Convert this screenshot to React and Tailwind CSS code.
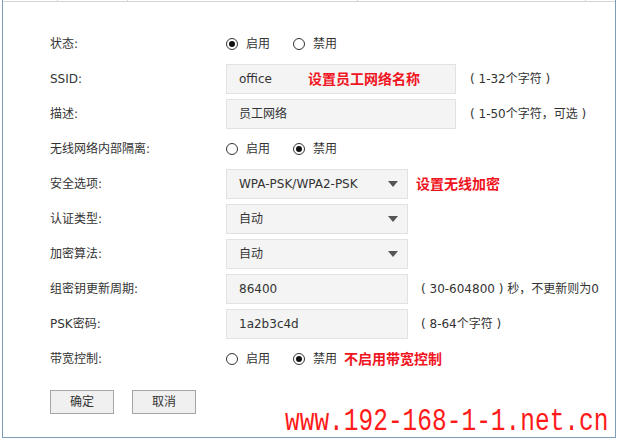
import React from "react";

const Radio = ({ checked }) => (
  <span className="w-[12px] h-[12px] rounded-full border border-[#333] bg-white flex items-center justify-center">
    {checked && <span className="w-[6px] h-[6px] rounded-full bg-[#111]" />}
  </span>
);

const RadioGroup = ({ value, note }) => (
  <div className="flex items-center gap-[23px]">
    <label className="flex items-center gap-[8px]">
      <Radio checked={value === "on"} />
      <span>启用</span>
    </label>
    <label className="flex items-center gap-[8px]">
      <Radio checked={value === "off"} />
      <span>禁用</span>
    </label>
    {note && <span className="-ml-[16px] text-[14px] font-bold text-[#f0141e]">{note}</span>}
  </div>
);

const Arrow = () => (
  <svg width="10" height="6" viewBox="0 0 10 6">
    <polygon points="0,0 10,0 5,6" fill="#555" />
  </svg>
);

const Select = ({ value }) => (
  <div className="w-[182px] h-[30px] bg-[#f4f4f4] border border-[#e2e2e2] pl-[12px] pr-[9px] flex items-center justify-between">
    <span>{value}</span>
    <Arrow />
  </div>
);

const Row = ({ label, children }) => (
  <div className="flex items-center h-[30px]">
    <div className="w-[176px]">{label}</div>
    {children}
  </div>
);

export default function App() {
  return (
    <div className="w-[618px] h-[439px] bg-white relative overflow-hidden text-[12px] text-[#333] font-['DejaVu_Sans','Noto_Sans_CJK_SC',sans-serif]">
      <div className="ml-[2px] w-[614px] h-[438px] border-l border-r border-b border-[#7f9db9] flex flex-col">
        <div className="h-[2px] flex border-b border-[#d4d4d4]">
          <div className="w-[55px] border-r border-[#d4d4d4]" />
          <div className="w-[70px] border-r border-[#d4d4d4]" />
          <div className="w-[230px] border-r border-[#d4d4d4]" />
          <div className="w-[228px] border-r border-[#d4d4d4]" />
          <div className="flex-1" />
        </div>

        <div className="pl-[47px] pt-[27px] flex flex-col gap-[5px]">
          <Row label="状态:">
            <RadioGroup value="on" />
          </Row>
          <Row label="SSID:">
            <div className="w-[230px] h-[30px] bg-[#f4f4f4] border border-[#e2e2e2] pl-[12px] flex items-center">
              <span className="w-[69px]">office</span>
              <span className="text-[14px] font-bold text-[#f0141e]">设置员工网络名称</span>
            </div>
            <span className="ml-[14px]">( 1-32个字符 )</span>
          </Row>
          <Row label="描述:">
            <div className="w-[230px] h-[30px] bg-[#f4f4f4] border border-[#e2e2e2] pl-[12px] flex items-center">
              员工网络
            </div>
            <span className="ml-[14px]">( 1-50个字符，可选 )</span>
          </Row>
          <Row label="无线网络内部隔离:">
            <RadioGroup value="off" />
          </Row>
          <Row label="安全选项:">
            <Select value="WPA-PSK/WPA2-PSK" />
            <span className="ml-[8px] text-[14px] font-bold text-[#f0141e]">设置无线加密</span>
          </Row>
          <Row label="认证类型:">
            <Select value="自动" />
          </Row>
          <Row label="加密算法:">
            <Select value="自动" />
          </Row>
          <Row label="组密钥更新周期:">
            <div className="w-[182px] h-[30px] bg-[#f4f4f4] border border-[#e2e2e2] pl-[12px] flex items-center">
              86400
            </div>
            <span className="ml-[13px] whitespace-nowrap">( 30-604800 ) 秒，不更新则为0</span>
          </Row>
          <Row label="PSK密码:">
            <div className="w-[182px] h-[30px] bg-[#f4f4f4] border border-[#e2e2e2] pl-[12px] flex items-center">
              1a2b3c4d
            </div>
            <span className="ml-[13px]">( 8-64个字符 )</span>
          </Row>
          <Row label="带宽控制:">
            <RadioGroup value="off" note="不启用带宽控制" />
          </Row>
        </div>

        <div className="pl-[47px] mt-[16px] flex gap-[18px]">
          <button className="w-[64px] h-[24px] border border-[#a5a5a5] bg-[#f0f0f0] text-[12px]">确定</button>
          <button className="w-[64px] h-[24px] border border-[#a5a5a5] bg-[#f0f0f0] text-[12px]">取消</button>
        </div>
      </div>

      <div className="absolute left-[285px] top-[410px] font-['Liberation_Mono',monospace] text-[24.5px] leading-[24px] text-[#ff1a1a] whitespace-nowrap">
        <span className="inline-block scale-y-125 origin-center">www.192-168-1-1.net.cn</span>
      </div>
    </div>
  );
}
